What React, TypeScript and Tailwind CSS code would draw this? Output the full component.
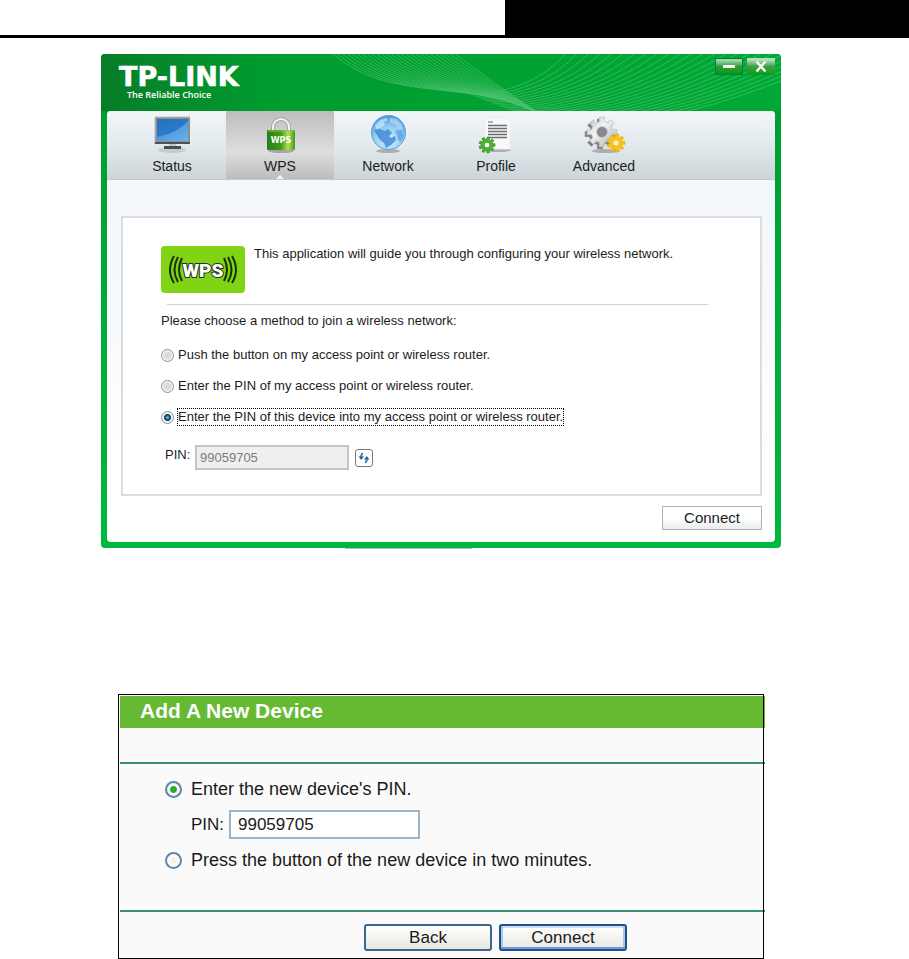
import React, { useState } from "react";

interface GearProps {
  cx: number;
  cy: number;
  r: number;
  teeth: number;
  fill: string;
  stroke: string;
  hole: string;
}

function Gear({ cx, cy, r, teeth, fill, stroke, hole }: GearProps) {
  const points: string[] = [];
  const step = (Math.PI * 2) / teeth;
  for (let i = 0; i < teeth; i++) {
    const a = i * step;
    [
      [a - step * 0.3, r * 0.72],
      [a - step * 0.22, r],
      [a + step * 0.22, r],
      [a + step * 0.3, r * 0.72],
    ].forEach(([angle, radius]) => {
      points.push(`${cx + Math.cos(angle) * radius},${cy + Math.sin(angle) * radius}`);
    });
  }
  return (
    <g>
      <polygon points={points.join(" ")} fill={fill} stroke={stroke} strokeWidth="0.8" />
      <circle cx={cx} cy={cy} r={r * 0.36} fill={hole} stroke={stroke} strokeWidth="0.8" />
    </g>
  );
}

function StatusIcon() {
  return (
    <svg viewBox="0 0 48 44" className="h-11 w-12" aria-hidden="true">
      <defs>
        <linearGradient id="screen" x1="0" y1="0" x2="0.6" y2="1">
          <stop offset="0" stopColor="#2a71b8" />
          <stop offset="1" stopColor="#2583d8" />
        </linearGradient>
        <linearGradient id="shine" x1="0" y1="0" x2="1" y2="1">
          <stop offset="0" stopColor="#3d94de" />
          <stop offset="1" stopColor="#8cc4ee" />
        </linearGradient>
      </defs>
      <ellipse cx="24" cy="38" rx="14" ry="3" fill="#9aa5aa" opacity="0.4" />
      <rect x="7" y="5" width="35" height="27" fill="#8b8f93" />
      <path d="M7 32V5h35" fill="none" stroke="#b9bdc0" />
      <rect x="9" y="7" width="31" height="22" fill="url(#screen)" />
      <path d="M9 29V25C20 23 32 18 40 9V29H9z" fill="url(#shine)" opacity="0.7" />
      <path d="M7 31h35" stroke="#4d5256" strokeWidth="2" />
      <rect x="21" y="32" width="7" height="3" fill="#c5c9cb" />
      <rect x="16" y="34" width="17" height="3" fill="#4b4f52" />
    </svg>
  );
}

function LockIcon() {
  return (
    <svg viewBox="0 0 48 44" className="h-11 w-12" aria-hidden="true">
      <defs>
        <linearGradient id="lock" x1="0" y1="0" x2="1" y2="0">
          <stop offset="0" stopColor="#2c7d12" />
          <stop offset="0.5" stopColor="#3f9c18" />
          <stop offset="0.75" stopColor="#b3df5a" />
          <stop offset="1" stopColor="#3f9c18" />
        </linearGradient>
      </defs>
      <ellipse cx="25" cy="39" rx="13" ry="2" fill="#555" opacity="0.4" />
      <path d="M17 19v-4a8 8 0 0 1 16 0v4" fill="none" stroke="#a4a4a4" strokeWidth="4" />
      <path d="M17 19v-4a8 8 0 0 1 16 0v4" fill="none" stroke="#f4f4f4" strokeWidth="2" />
      <rect x="11" y="18" width="28" height="20" rx="1" fill="url(#lock)" />
      <path d="M12 19h26" stroke="#8bc94e" />
      <text x="25" y="31" textAnchor="middle" fill="#fff" className="font-['DejaVu_Sans',sans-serif] text-[8px] font-bold">
        WPS
      </text>
    </svg>
  );
}

function GlobeIcon() {
  return (
    <svg viewBox="0 0 48 44" className="h-11 w-12" aria-hidden="true">
      <defs>
        <radialGradient id="globe" cx="0.5" cy="0.75" r="0.75">
          <stop offset="0" stopColor="#d4f0ff" />
          <stop offset="0.55" stopColor="#94cdf2" />
          <stop offset="1" stopColor="#4a94d6" />
        </radialGradient>
      </defs>
      <ellipse cx="24" cy="39" rx="12" ry="2" fill="#777" opacity="0.5" />
      <circle cx="24.5" cy="20.5" r="17" fill="url(#globe)" stroke="#5f9fd6" />
      <path d="M11 13l5-5 6-2 2 2-4 2 1 3-5 3-4 1z" fill="#ddf3fd" opacity="0.6" />
      <path d="M26 6l7 1 5 6 1 5-5-1-3-5-5-1z" fill="#cfeafa" opacity="0.5" />
      <path d="M10 18l6-1 5 2 3-2 4 4-3 3 2 2 4-2 1 4-5 5-5 3-2-5-4-3-3-5z" fill="#3f83d3" opacity="0.8" />
      <path d="M31 19l6-1 3 6-3 6-3-2-1-5z" fill="#4b94dc" opacity="0.6" />
    </svg>
  );
}

function ProfileIcon() {
  return (
    <svg viewBox="0 0 48 44" className="h-11 w-12" aria-hidden="true">
      <ellipse cx="27" cy="38" rx="12" ry="2" fill="#777" opacity="0.5" />
      <rect x="13" y="6" width="25" height="31" fill="#f8f8f8" stroke="#eceeef" />
      <path d="M16 10h5" stroke="#666" />
      <path d="M16 13.500h19M16 16.500h19M16 19.500h19M16 22.500h19M16 25.500h19" stroke="#6b6e70" strokeWidth="1.300" />
      <Gear cx={15} cy={33} r={8} teeth={9} fill="#4db52c" stroke="#2f8e1a" hole="#ffffff" />
    </svg>
  );
}

function AdvancedIcon() {
  return (
    <svg viewBox="0 0 48 44" className="h-11 w-12" aria-hidden="true">
      <defs>
        <linearGradient id="steel" x1="0" y1="0" x2="1" y2="1">
          <stop offset="0" stopColor="#b2b5b6" />
          <stop offset="0.4" stopColor="#f4f4f4" />
          <stop offset="1" stopColor="#a9abac" />
        </linearGradient>
      </defs>
      <ellipse cx="26" cy="39" rx="14" ry="2" fill="#777" opacity="0.5" />
      <Gear cx={20} cy={22} r={15} teeth={8} fill="#808284" stroke="#808284" hole="#75797c" />
      <Gear cx={22} cy={20} r={15} teeth={8} fill="url(#steel)" stroke="#c0c2c3" hole="#85898c" />
      <Gear cx={36} cy={31} r={9} teeth={9} fill="#f8c31c" stroke="#eba915" hole="#fff3b0" />
    </svg>
  );
}

function WpsBadge() {
  return (
    <svg viewBox="0 0 84 47" className="h-[47px] w-[84px] shrink-0" role="img" aria-label="WPS">
      <rect width="84" height="47" rx="4" fill="#80d315" />
      <g fill="none" stroke="#16320a" strokeWidth="2">
        <path d="M13 10q-8 14 0 27M17 11q-7 13 0 25M21 12q-6 12 0 23" />
        <path d="M71 10q8 14 0 27M67 11q7 13 0 25M63 12q6 12 0 23" />
      </g>
      <text
        x="42"
        y="31"
        textAnchor="middle"
        fill="#fff"
        stroke="#24331c"
        strokeWidth="2"
        paintOrder="stroke"
        className="font-['Roboto',sans-serif] text-[19px] font-black"
      >
        WPS
      </text>
    </svg>
  );
}

// Builds a fan of curves that run evenly from the first curve to the last
function fan(first: number[], last: number[], count: number) {
  return Array.from({ length: count }, (_, i) => {
    const t = i / (count - 1);
    const p = first.map((v, k) => Math.round((v + (last[k] - v) * t) * 10) / 10);
    return `M${p[0]} ${p[1]}C${p[2]} ${p[3]} ${p[4]} ${p[5]} ${p[6]} ${p[7]}`;
  }).join("");
}

function TitleWaves() {
  return (
    <svg viewBox="0 0 680 57" preserveAspectRatio="xMaxYMin slice" className="absolute inset-0 h-full w-full" aria-hidden="true">
      <g fill="none" stroke="#b5eebf" strokeWidth="0.7" opacity="0.4">
        <path d={fan([232, 0, 290, 50, 365, 24, 434, 58], [354, 0, 380, 19, 406, 38, 436, 58], 26)} />
        <path d={fan([464, 0, 446, 22, 415, 38, 370, 41], [740, 0, 660, 40, 560, 72, 460, 76], 25)} />
      </g>
    </svg>
  );
}

const tabs = [
  { name: "Status", Icon: StatusIcon },
  { name: "WPS", Icon: LockIcon },
  { name: "Network", Icon: GlobeIcon },
  { name: "Profile", Icon: ProfileIcon },
  { name: "Advanced", Icon: AdvancedIcon },
];

const methods = [
  "Push the button on my access point or wireless router.",
  "Enter the PIN of my access point or wireless router.",
  "Enter the PIN of this device into my access point or wireless router.",
];

function UtilityWindow() {
  const [tab, setTab] = useState("WPS");
  const [method, setMethod] = useState(2);

  return (
    <section className="mr-32 ml-[101px] rounded bg-linear-to-b from-[#009a30] to-[#00b840] px-1.5 pb-1.5 text-[#1c1c1c]">
      <header className="relative -mx-1.5 flex h-[57px] items-start justify-between overflow-hidden rounded-t bg-linear-to-r from-[#067d27] via-[#009c30] via-25% to-[#00a936]">
        <TitleWaves />
        <svg viewBox="0 0 150 46" className="relative mt-2 ml-4 h-[46px] w-[150px]" role="img" aria-label="TP-LINK The Reliable Choice">
          <text x="2" y="24" fill="#fff" stroke="#fff" strokeWidth="0.6" className="font-['DejaVu_Sans',sans-serif] text-[27px] font-bold">
            TP-LINK
          </text>
          <text x="10" y="36" fill="#fff" className="font-['Open_Sans',sans-serif] text-[9px] font-semibold">
            The Reliable Choice
          </text>
        </svg>
        <div className="relative mt-1 mr-1.5 flex gap-1">
          <button type="button" aria-label="Minimize" className="flex h-[17px] w-7 items-center justify-center border border-[#087a4a] bg-linear-to-b from-[#9ad8a0] from-10% via-[#2c9a38] via-50% to-[#009a10]">
            <span className="h-[3px] w-3 bg-[#f0f8f0]" />
          </button>
          <button type="button" aria-label="Close" className="flex h-[17px] w-7 items-center justify-center bg-linear-to-b from-[#b4e2b8] from-10% via-[#3c9f45] via-50% to-[#009a10]">
            <svg viewBox="0 0 12 11" className="h-[11px] w-3" aria-hidden="true">
              <path d="M1.500 0.500l9 10M10.500 0.500l-9 10" stroke="#f0f8f0" strokeWidth="2.500" />
            </svg>
          </button>
        </div>
      </header>

      <div className="rounded bg-linear-to-b from-[#f2f6f9] via-[#f7fafc] to-white to-80%">
        <nav className="flex h-[69px] rounded-t border-b border-[#c2cacd] bg-linear-to-b from-[#f0f5f8] via-[#e3eaed] to-[#ccd5d8] pl-[11px]">
          {tabs.map(({ name, Icon }) => (
            <button
              key={name}
              type="button"
              onClick={() => setTab(name)}
              className={`relative flex w-[108px] flex-col items-center pt-px text-sm leading-5 ${
                tab === name ? "bg-linear-to-b from-[#bdbdbd] via-[#dedede] via-60% to-[#bcbcbc]" : ""
              }`}
            >
              <Icon />
              <span>{name}</span>
              {tab === name && (
                <span className="absolute bottom-0 border-x-4 border-b-4 border-x-transparent border-b-[#f2f6f9]" />
              )}
            </button>
          ))}
        </nav>

        <div className="pt-9 pr-[13px] pb-3 pl-3.5">
          <div className="border-2 border-[#dcdcde] bg-white px-[38px] pt-7 pb-6 text-[13px] leading-5">
            <div className="flex gap-[9px]">
              <WpsBadge />
              <p className="-mt-0.5">This application will guide you through configuring your wireless network.</p>
            </div>
            <hr className="mt-[11px] mr-3.5 ml-1.5 border-[#d2d2d2]" />
            <fieldset>
              <legend className="pt-1.5 pb-3.5">Please choose a method to join a wireless network:</legend>
              <div className="flex flex-col items-start gap-[11px]">
                {methods.map((text, i) => (
                  <label key={text} className="flex h-5 items-center gap-1">
                    <input
                      type="radio"
                      name="method"
                      checked={method === i}
                      onChange={() => setMethod(i)}
                      className="size-[13px] shrink-0 appearance-none rounded-full border border-[#8e8f8f] bg-[radial-gradient(circle,#d3d6d8_0,#dcdfe1_45%,#f4f4f4_65%)] checked:bg-[radial-gradient(circle,#6cc4ea_0,#0c4068_35%,#0c4068_40%,#f4f4f4_50%)]"
                    />
                    <span className={`leading-4 outline-1 outline-black ${method === i ? "outline-dotted" : "outline-none"}`}>{text}</span>
                  </label>
                ))}
              </div>
            </fieldset>
            <div className="mt-[18px] flex items-start">
              <label htmlFor="device-pin" className="w-[34px] pl-1">
                PIN:
              </label>
              <input
                id="device-pin"
                readOnly
                defaultValue="99059705"
                className="h-[25px] w-[154px] border-2 border-[#c4c4c4] bg-[#efefef] pl-[3px] text-[#7b7b7b]"
              />
              <button type="button" aria-label="Generate new PIN" className="mt-1 ml-1.5 flex size-[18px] items-center justify-center rounded-[3px] border border-[#777] bg-white">
                <svg viewBox="0 0 12 12" className="size-3" aria-hidden="true">
                  <path d="M5 1.500Q3 2 3 6M7 10.500Q9 10 9 6" fill="none" stroke="#3d88c4" strokeWidth="2" />
                  <path d="M0.500 5L3.200 2 6 5zM6 7L8.800 10 11.500 7z" fill="none" />
                  <path d="M0.500 4.500h5.500L3.200 8zM6 7.500h5.500L8.800 4z" fill="#24629a" />
                </svg>
              </button>
            </div>
          </div>
          <div className="mt-2.5 flex justify-end">
            <button type="button" className="h-6 w-[100px] border border-[#b0b3b6] bg-linear-to-b from-white via-white to-[#e6ecef] text-[15px] leading-5">
              Connect
            </button>
          </div>
        </div>
      </div>
    </section>
  );
}

function AddDevicePanel() {
  const [mode, setMode] = useState("pin");
  const radio =
    "size-[17px] shrink-0 appearance-none rounded-full border-2 border-[#5d86aa] bg-[radial-gradient(circle,#ecece6_0,#ffffff_70%)] checked:bg-[radial-gradient(circle,#35b035_0,#2ba52b_32%,#f5f5f2_42%)]";

  return (
    <section className="relative mr-36 ml-[118px] pt-0.5 pl-0.5 text-[17px] leading-6 text-[#1a1a1a]">
      <h2 className="h-8 bg-[#66b933] pl-5 text-[21px] leading-[30px] font-bold text-white">Add A New Device</h2>
      <div className="bg-[#fafafa] pt-[34px]">
        <div className="border-y-2 border-[#3c9168] pt-[13px] pb-[38px] pl-[45px]">
          <label className="flex items-center gap-[9px] text-lg leading-6">
            <input type="radio" name="mode" checked={mode === "pin"} onChange={() => setMode("pin")} className={radio} />
            Enter the new device's PIN.
          </label>
          <div className="my-[9px] flex items-center pl-[26px]">
            <label htmlFor="new-pin" className="w-[38px]">
              PIN:
            </label>
            <input id="new-pin" defaultValue="99059705" className="h-[29px] w-[191px] border-2 border-[#9cb4ca] bg-white pl-[7px]" />
          </div>
          <label className="flex items-center gap-[9px] text-lg leading-6">
            <input type="radio" name="mode" checked={mode === "button"} onChange={() => setMode("button")} className={radio} />
            Press the button of the new device in two minutes.
          </label>
        </div>
        <div className="flex justify-end gap-[7px] pt-3 pr-[138px] pb-2">
          <button type="button" className="h-[27px] w-32 rounded-[3px] border-2 border-[#3b6690] bg-linear-to-b from-white to-[#e8e7de] leading-none">
            Back
          </button>
          <button type="button" className="h-[27px] w-32 rounded-[3px] border-2 border-[#1f5283] bg-linear-to-b from-white to-[#e8e7de] leading-none shadow-[inset_0_-2px_0_#6f96e0,inset_2px_0_0_#a9c6f3,inset_-2px_0_0_#a9c6f3,inset_0_2px_0_#cfe0fb]">
            Connect
          </button>
        </div>
      </div>
      <div className="pointer-events-none absolute inset-y-0 right-px left-0 border border-black" />
    </section>
  );
}

export default function App() {
  return (
    <main className="bg-white font-['Liberation_Sans',Arial,sans-serif]">
      <div className="mb-4 flex h-[38px] justify-end border-b-[3px] border-black">
        <div className="w-4/9 bg-black" />
      </div>
      <UtilityWindow />
      <div className="mr-[437px] mb-[145px] ml-[345px] h-px bg-[#a9bfd6]" />
      <AddDevicePanel />
    </main>
  );
}
